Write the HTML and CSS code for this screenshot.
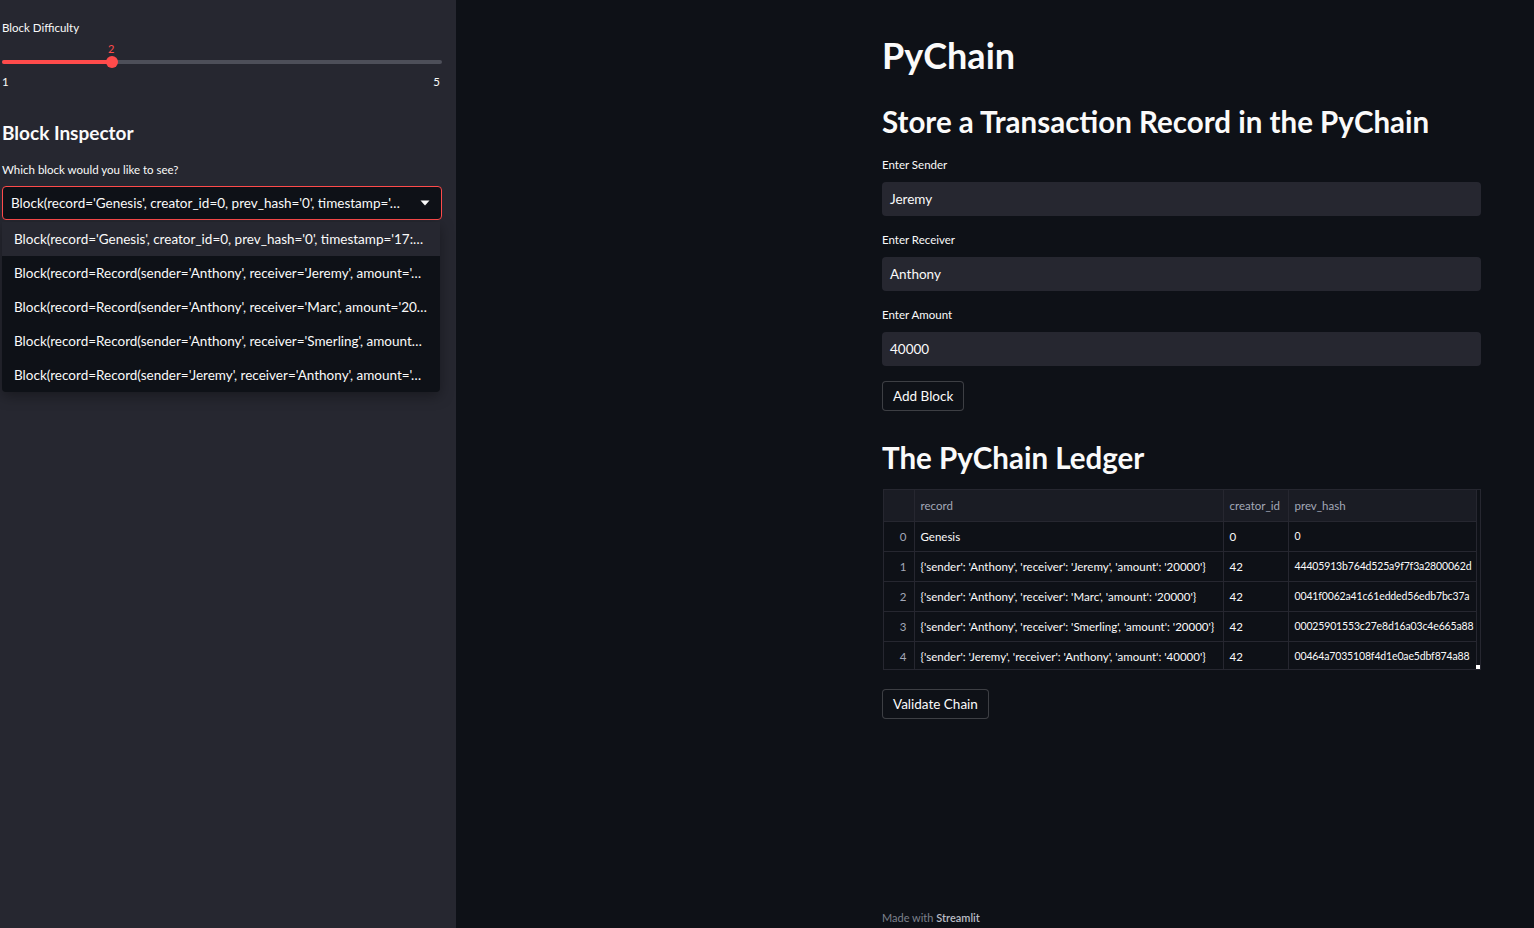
FILE: index.html
```html
<!DOCTYPE html>
<html lang="en">
<head>
<meta charset="utf-8">
<title>PyChain</title>
<link rel="stylesheet" href="styles.css">
</head>
<body>
<div class="app">
  <aside class="sidebar">
    <div class="widget-label lbl-diff">Block Difficulty</div>
    <div class="slider">
      <div class="slider-value">2</div>
      <div class="track">
        <div class="track-fill"></div>
        <div class="thumb"></div>
      </div>
      <div class="slider-ticks"><span>1</span><span>5</span></div>
    </div>
    <h2 class="side-heading">Block Inspector</h2>
    <div class="widget-label lbl-select">Which block would you like to see?</div>
    <div class="select-wrap">
      <div class="select">
        <span class="select-text">Block(record='Genesis', creator_id=0, prev_hash='0', timestamp='…</span>
        <svg class="caret" width="10" height="6" viewBox="0 0 10 6"><path d="M0.5 0.5h9L5 5.5z" fill="#fafafa"/></svg>
      </div>
      <ul class="menu">
        <li class="active">Block(record='Genesis', creator_id=0, prev_hash='0', timestamp='17:…</li>
        <li>Block(record=Record(sender='Anthony', receiver='Jeremy', amount='…</li>
        <li>Block(record=Record(sender='Anthony', receiver='Marc', amount='20…</li>
        <li>Block(record=Record(sender='Anthony', receiver='Smerling', amount…</li>
        <li>Block(record=Record(sender='Jeremy', receiver='Anthony', amount='…</li>
      </ul>
    </div>
  </aside>
  <main class="main">
    <div class="content">
      <h1 class="title">PyChain</h1>
      <h2 class="heading h-store">Store a Transaction Record in the PyChain</h2>
      <div class="field field-first">
        <div class="widget-label">Enter Sender</div>
        <div class="input">Jeremy</div>
      </div>
      <div class="field">
        <div class="widget-label">Enter Receiver</div>
        <div class="input">Anthony</div>
      </div>
      <div class="field">
        <div class="widget-label">Enter Amount</div>
        <div class="input">40000</div>
      </div>
      <button class="btn btn-add">Add Block</button>
      <h2 class="heading h-ledger">The PyChain Ledger</h2>
      <div class="grid-wrap">
        <table class="grid">
          <colgroup>
            <col class="c-idx"><col class="c-rec"><col class="c-cre"><col class="c-hash">
          </colgroup>
          <thead>
            <tr><th></th><th>record</th><th>creator_id</th><th>prev_hash</th></tr>
          </thead>
          <tbody>
            <tr><td class="idx">0</td><td>Genesis</td><td>0</td><td class="hash">0</td></tr>
            <tr><td class="idx">1</td><td>{'sender': 'Anthony', 'receiver': 'Jeremy', 'amount': '20000'}</td><td>42</td><td class="hash">44405913b764d525a9f7f3a2800062d</td></tr>
            <tr><td class="idx">2</td><td>{'sender': 'Anthony', 'receiver': 'Marc', 'amount': '20000'}</td><td>42</td><td class="hash">0041f0062a41c61edded56edb7bc37a</td></tr>
            <tr><td class="idx">3</td><td>{'sender': 'Anthony', 'receiver': 'Smerling', 'amount': '20000'}</td><td>42</td><td class="hash">00025901553c27e8d16a03c4e665a88</td></tr>
            <tr><td class="idx">4</td><td>{'sender': 'Jeremy', 'receiver': 'Anthony', 'amount': '40000'}</td><td>42</td><td class="hash">00464a7035108f4d1e0ae5dbf874a88</td></tr>
          </tbody>
        </table>
        <span class="resize"></span>
      </div>
      <button class="btn btn-validate">Validate Chain</button>
    </div>
    <footer class="footer">Made with <b>Streamlit</b></footer>
  </main>
</div>
</body>
</html>
```
FILE: styles.css
```css
* { box-sizing: border-box; }
html, body { margin: 0; padding: 0; }
body {
  font-family: Lato, "Noto Sans", sans-serif;
  color: #fafafa;
  background: #0e1117;
}
.app { display: flex; width: 1534px; height: 928px; overflow: hidden; }

.sidebar {
  width: 456px;
  flex: none;
  background: #262730;
  padding: 20px 14px 0 2px;
}
.widget-label { font-size: 11.5px; line-height: 16px; color: #fafafa; }
.slider { position: relative; margin-top: 6px; }
.slider-value {
  color: #ff4b4b;
  font-size: 11px;
  line-height: 14px;
  padding-left: 106px;
}
.track {
  position: relative;
  height: 4px;
  margin-top: 4px;
  border-radius: 2px;
  background: #4d4f59;
}
.track-fill {
  width: 110px;
  height: 4px;
  border-radius: 2px;
  background: #ff4b4b;
}
.thumb {
  position: absolute;
  left: 104px;
  top: -4px;
  width: 12px;
  height: 12px;
  border-radius: 50%;
  background: #ff4b4b;
}
.slider-ticks {
  display: flex;
  justify-content: space-between;
  font-size: 11.5px;
  line-height: 14px;
  margin-top: 11px;
  padding-right: 2px;
}
.side-heading {
  margin: 31px 0 0;
  font-size: 19px;
  line-height: 26px;
  font-weight: 700;
}
.lbl-select { margin-top: 16px; }
.select-wrap { position: relative; margin-top: 8px; }
.select {
  height: 34px;
  border: 1px solid #ff4b4b;
  border-radius: 4px;
  background: #0e1117;
  display: flex;
  align-items: center;
  justify-content: space-between;
  padding: 0 11px 0 8px;
  font-size: 13.5px;
}
.caret { flex: none; }
.menu {
  position: absolute;
  left: 0;
  top: 36px;
  width: 438px;
  margin: 0;
  padding: 0;
  list-style: none;
  background: #0e1117;
  border-radius: 0 0 4px 4px;
  box-shadow: 0 4px 14px rgba(0,0,0,0.35);
}
.menu li {
  height: 34px;
  line-height: 34px;
  padding-left: 12px;
  font-size: 13.5px;
  white-space: nowrap;
  overflow: hidden;
}
.menu li.active { background: #262730; }

.main {
  flex: 1;
  position: relative;
  padding-left: 426px;
}
.content { width: 599px; padding-top: 32px; }
.title {
  margin: 0;
  font-size: 36px;
  line-height: 46px;
  font-weight: 700;
}
.heading {
  margin: 0;
  font-size: 29.5px;
  line-height: 40px;
  font-weight: 700;
}
.h-store { margin-top: 24px; }
.field { margin-top: 16px; }
.field.field-first { margin-top: 15px; }
.field .widget-label { margin-bottom: 9px; }
.input {
  height: 34px;
  background: #262730;
  border-radius: 4px;
  padding-left: 8px;
  display: flex;
  align-items: center;
  font-size: 13.5px;
}
.btn {
  display: block;
  font-family: inherit;
  color: #fafafa;
  background: #0e1117;
  border: 1px solid rgba(250,250,250,0.2);
  border-radius: 4px;
  font-size: 13.5px;
  height: 30px;
  padding: 0 10px;
}
.btn-add { margin-top: 15px; }
.h-ledger { margin-top: 27px; }
.grid-wrap {
  position: relative;
  margin-top: 11px;
  margin-left: 1px;
  width: 598px;
  height: 181px;
  border: 1px solid #262730;
  overflow: hidden;
}
.grid {
  border-collapse: collapse;
  table-layout: fixed;
  width: 592px;
  font-size: 11.5px;
}
.c-idx { width: 30px; }
.c-rec { width: 309px; }
.c-cre { width: 65px; }
.c-hash { width: 188px; }
.grid th, .grid td {
  border-right: 1px solid #262730;
  border-bottom: 1px solid #262730;
  white-space: nowrap;
  overflow: hidden;
  text-overflow: clip;
  text-align: left;
  padding: 0 6px;
}
.grid th {
  height: 31px;
  background: #1a1c24;
  font-weight: 400;
  color: #a3a8b8;
}
.grid td { height: 30px; color: #fafafa; }
.grid td.idx { text-align: right; color: #a3a8b8; padding-right: 7px; }
.grid td.hash { font-size: 10.5px; letter-spacing: -0.15px; padding-left: 6px; padding-right: 0; }
.grid tbody tr:last-child td { border-bottom: none; }
.resize {
  position: absolute;
  right: 0;
  bottom: 0;
  width: 4px;
  height: 4px;
  background: #ffffff;
}
.btn-validate { margin-top: 19px; }
.footer {
  position: absolute;
  left: 426px;
  bottom: 4px;
  font-size: 11px;
  color: #7d818c;
}
.footer b { font-weight: 600; color: #b9bcc4; }
```
